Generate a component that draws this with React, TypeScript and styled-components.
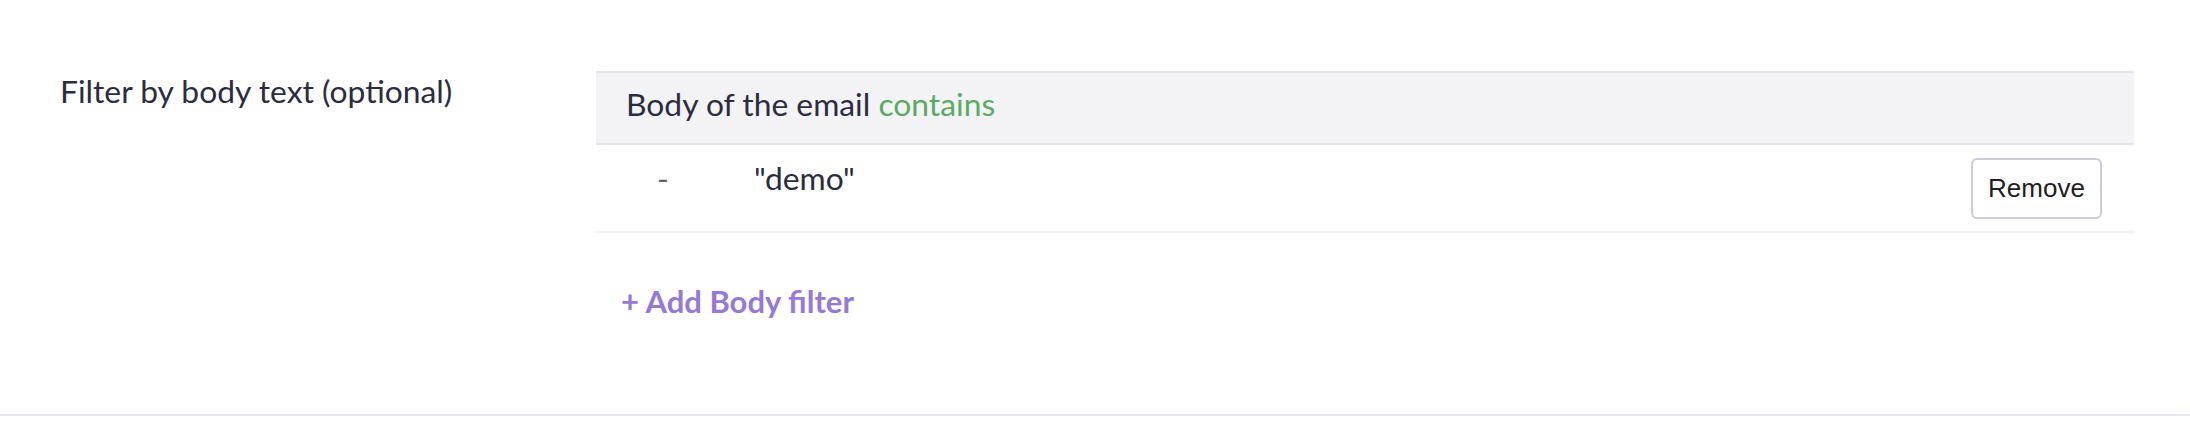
import React from 'react';
import styled, { createGlobalStyle } from 'styled-components';

const Global = createGlobalStyle`
  html, body { margin: 0; padding: 0; background: #ffffff; }
  body {
    font-family: Lato, "Noto Sans", sans-serif;
    color: #2b2c3f;
    -webkit-font-smoothing: antialiased;
  }
  * { box-sizing: border-box; }
`;

const Section = styled.section`
  display: flex;
  align-items: flex-start;
  height: 416px;
  padding: 71px 56px 0 60px;
  border-bottom: 2px solid #e6e6ee;
`;

const Label = styled.div`
  width: 536px;
  flex: none;
  font-size: 31.8px;
  line-height: 40px;
  color: #2b2c3f;
`;

const Content = styled.div`
  flex: 1;
  display: flex;
  flex-direction: column;
`;

const Table = styled.div`
  display: flex;
  flex-direction: column;
`;

const Header = styled.div`
  background: #f3f3f6;
  border-top: 2px solid #e4e4ec;
  border-bottom: 2px solid #e4e4ec;
  padding: 11px 30px 19px;
  font-size: 31.8px;
  line-height: 40px;
  color: #2b2c3f;
`;

const Operator = styled.span`
  color: #5aab61;
`;

const Row = styled.div`
  display: flex;
  align-items: flex-start;
  padding: 13px 32px 12px 0;
  border-bottom: 2px solid #f1f1f4;
`;

const Bullet = styled.span`
  width: 158px;
  padding-left: 61px;
  flex: none;
  font-size: 31.8px;
  line-height: 40px;
  color: #5b5d72;
`;

const Value = styled.span`
  flex: 1;
  font-size: 31.8px;
  line-height: 40px;
  color: #2b2c3f;
`;

const RemoveButton = styled.button`
  width: 131px;
  height: 61px;
  flex: none;
  background: #ffffff;
  border: 2px solid #cbcbdc;
  border-radius: 6px;
  font-family: "Liberation Sans", Arial, sans-serif;
  font-size: 26px;
  color: #1f2024;
  cursor: pointer;
  padding: 0;
`;

const AddLink = styled.a`
  margin-top: 48px;
  margin-left: 25px;
  font-size: 31px;
  line-height: 40px;
  font-weight: 700;
  color: #9479d8;
  text-decoration: none;
  cursor: pointer;
`;

export default function App() {
  return (
    <>
      <Global />
      <Section>
        <Label>Filter by body text (optional)</Label>
        <Content>
          <Table>
            <Header>
              Body of the email <Operator>contains</Operator>
            </Header>
            <Row>
              <Bullet>-</Bullet>
              <Value>"demo"</Value>
              <RemoveButton>Remove</RemoveButton>
            </Row>
          </Table>
          <AddLink>+ Add Body filter</AddLink>
        </Content>
      </Section>
    </>
  );
}
